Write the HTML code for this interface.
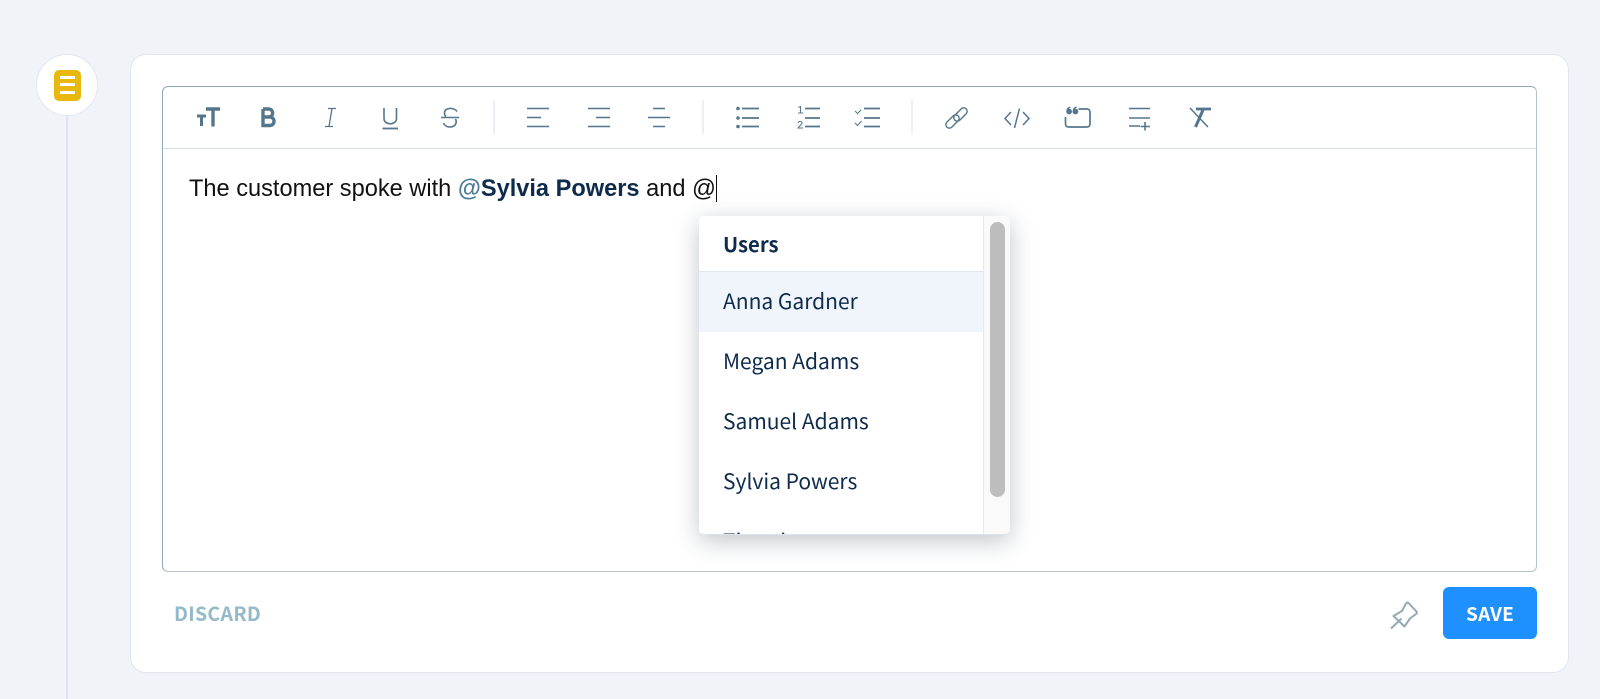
<!DOCTYPE html>
<html lang="en"><head><meta charset="utf-8"><title>Editor</title>
<style>
html,body{margin:0;padding:0;width:1600px;height:699px;overflow:hidden;background:#f0f4f9}
body{position:relative;font-family:"Noto Sans CJK SC","Liberation Sans",sans-serif}
div,span{box-sizing:border-box}
.a{position:absolute}
.line{left:66px;top:115px;width:2px;height:584px;background:#dde4ee}
.circle{left:36px;top:54px;width:62px;height:62px;border-radius:50%;background:#fff;border:1px solid #e2e8f0}
.doc{left:53.5px;top:69.5px;width:27px;height:31px;border-radius:5px;background:#e8b80f}
.doc i{position:absolute;left:6px;width:15px;height:3px;background:#fff}
.card{left:129.5px;top:53.500px;width:1439px;height:619px;background:#fff;border:1px solid #e0e7f0;border-radius:16px}
.editor{left:162px;top:86px;width:1375px;height:486px;background:#fff;border:1px solid #8fa6b8;border-bottom-color:#b4c2ce;border-right-color:#b4c2ce;border-radius:6px}
.tb{left:163px;top:148px;width:1373px;height:1px;background:#d6dfe9}
.txt{left:189px;top:176px;font:23.6px/27px "Liberation Sans",sans-serif;color:#111;white-space:pre}
.txt b{color:#0f2b4c}.txt b span{color:#4f7c9b}
.cursor{left:715.5px;top:175px;width:1.3px;height:27px;background:#111}
.menu{left:699px;top:216px;width:311px;height:319px;background:#fff;border-radius:5px;overflow:hidden;box-shadow:0 6px 24px rgba(30,50,70,.28);border-bottom:1px solid #dbe3ec}
.head{left:0;top:0;width:284px;height:56px;border-bottom:1.5px solid #e2e8f0;font-weight:700;font-size:20.3px;color:#0f2b4c;padding:13px 0 0 24px;line-height:28px}
.row{left:0;width:284px;height:60px;font-size:21px;color:#0f2b4c;padding-left:24px;line-height:58px;white-space:nowrap}
.sb{left:284px;top:0;width:27px;height:319px;background:#fafafa;border-left:1.5px solid #e8e8e8}
.th{left:291px;top:6px;width:15px;height:275px;border-radius:8px;background:#bdbdbd}
.disc{left:174px;top:598px;font-weight:700;font-size:19.5px;letter-spacing:.3px;line-height:30px;color:#94b9c9}
.save{left:1443px;top:587px;width:94px;height:52px;border-radius:6px;background:#1e90ff;color:#fff;font-weight:700;font-size:19px;text-align:center;line-height:53px;letter-spacing:.2px}
svg{position:absolute;left:0;top:0}
</style></head><body>
<div class="a line"></div>
<div class="a circle"></div>
<div class="a doc"><i style="top:6px"></i><i style="top:13.5px"></i><i style="top:21px"></i></div>
<div class="a card"></div>
<div class="a editor"></div>
<div class="a tb"></div>
<svg width="1600" height="699" viewBox="0 0 1600 699" fill="none" stroke="#54768d" stroke-width="1.6">
<path d="M494 100V134M703 100V134M912 100V134" stroke="#e8edf3" stroke-width="1.6"/>
<path d="M197 116H206M201.500 116V126" stroke-width="3"/>
<path d="M206 109H220M213 109V126.500" stroke-width="3.400"/>
<path d="M263 109V125.500H269.500C275.500 125.500 275.500 117 269.500 117H263M263 117H268.500C274 117 274 109 268.500 109H263" stroke-width="3.400"/>
<path d="M328 108.500H336M325 126.500H333M332 108.500L329 126.500" stroke-width="1.300"/>
<path d="M384 108V118.500C384 125.500 396.500 125.500 396.500 118.500V108"/><path d="M382.500 128.500H398" stroke-width="1.800"/>
<path d="M441 117.500H459"/><path d="M457 111.500C455 107.500 445 107 444.500 112.500C444.300 114 445 115.500 446 116.500M455.500 119C457.500 123 455 127 450 127C446.500 127 444.500 125.500 443.500 123"/>
<path d="M527 108.500H549M527 117.500H541M527 126.500H549M588 108.500H610M596 117.500H610M588 126.500H610M653 108.500H665M648 117.500H670M653 126.500H665" stroke-width="1.500"/>
<path d="M742 108.500H759M742 118H759M742 126.500H759" stroke-width="1.700"/>
<circle cx="738" cy="108.500" r="1.800" fill="#54768d" stroke="none"/><circle cx="738" cy="118" r="1.800" fill="#54768d" stroke="none"/><circle cx="738" cy="126.500" r="1.800" fill="#54768d" stroke="none"/>
<path d="M805 108.500H820M805 118H820M805 126.500H820" stroke-width="1.700"/>
<path d="M798.500 107.500L800.500 106.500V113M798 113H803" stroke-width="1"/>
<path d="M798 123C799 120.500 802.500 121 802 123.500L798 128H803" stroke-width="1"/>
<path d="M864 108.500H880M864 118H880M864 126.500H880" stroke-width="1.700"/>
<path d="M855 111L857.500 113.500L861 110M855 123L857.500 125.500L861.500 121" stroke-width="1.100"/>
<rect x="944.500" y="118" width="16" height="7" rx="3.500" transform="rotate(-45 952.500 121.500)" stroke-width="1.400"/>
<rect x="952.500" y="111" width="16" height="7" rx="3.500" transform="rotate(-45 960.500 114.500)" stroke-width="1.400"/>
<path d="M1011 112L1005 118.500L1011 125M1023 112L1029 118.500L1023 125M1019.500 108.500L1014.500 128" stroke-width="1.500"/>
<path d="M1065.500 117V123.500C1065.500 126 1066.500 127 1069 127H1086.500C1089 127 1090 126 1090 123.500V112.500C1090 110 1089 109 1086.500 109H1078.500" stroke-width="1.700"/>
<path d="M1066.700 111.500a2.400 2.400 0 1 0 4.800 0a2.400 2.400 0 1 0-4.800 0zM1067 110.500C1067 108.500 1068 107.500 1070.500 107M1073 111.500a2.400 2.400 0 1 0 4.800 0a2.400 2.400 0 1 0-4.800 0zM1073.300 110.500C1073.300 108.500 1074.300 107.500 1076.800 107" fill="#54768d" stroke-width="1"/>
<path d="M1129 108.500H1150M1129 118H1150M1129 126H1140M1145 122V130.500M1140.500 126.500H1150" stroke-width="1.600"/>
<path d="M1196 109H1211" stroke-width="2.800"/><path d="M1203 110L1195.500 127" stroke-width="3"/><path d="M1190 108L1208 127" stroke-width="1.500"/>
<path d="M1391 628.500L1401.500 618.500" stroke="#94a9b5" stroke-width="2"/>
<path d="M1393.500 616L1402 611L1406 603.500Q1407 602 1408.500 603L1416.500 611.500Q1417.500 613 1416 614L1410 618.500L1404.500 626.500Z" stroke="#94a9b5" stroke-width="2" stroke-linejoin="round"/>
</svg>
<div class="a txt">The customer spoke with <b><span>@</span>Sylvia Powers</b> and @</div>
<div class="a cursor"></div>
<div class="a menu">
<div class="a head">Users</div>
<div class="a row" style="top:56px;background:#f0f5fc">Anna Gardner</div>
<div class="a row" style="top:116px">Megan Adams</div>
<div class="a row" style="top:176px">Samuel Adams</div>
<div class="a row" style="top:236px">Sylvia Powers</div>
<div class="a row" style="top:296px">Timmie</div>
<div class="a sb"></div><div class="a th"></div>
</div>
<div class="a disc">DISCARD</div>
<div class="a save">SAVE</div>
</body></html>
